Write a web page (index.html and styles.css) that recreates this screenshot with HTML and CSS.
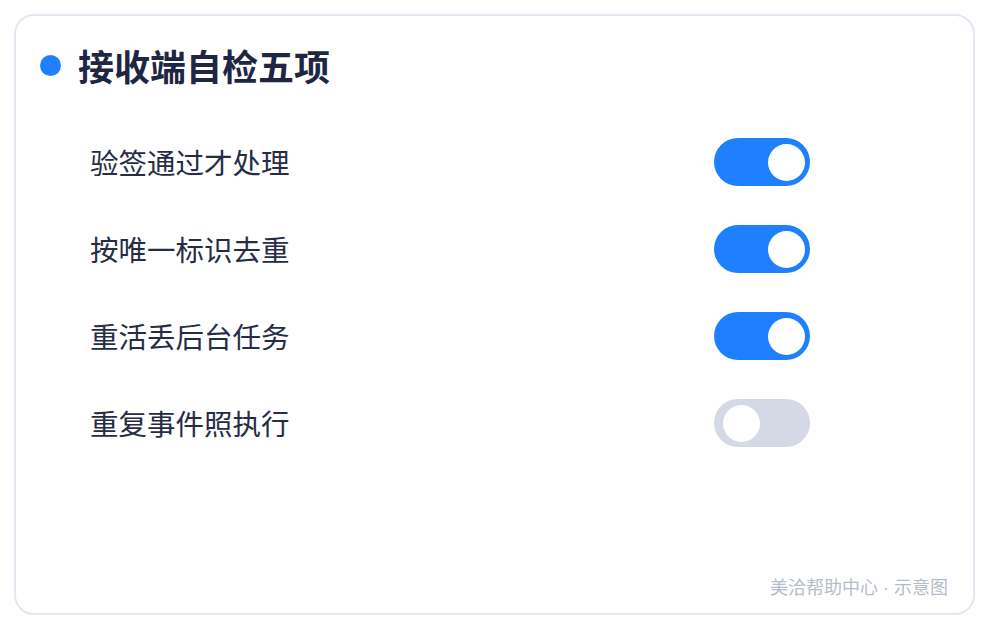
FILE: index.html
```html
<!DOCTYPE html>
<html lang="zh">
<head>
<meta charset="utf-8">
<link rel="stylesheet" href="styles.css">
</head>
<body>
<div class="page">
  <div class="card">
    <div class="title-row">
      <span class="dot"></span>
      <h1 class="title">接收端自检五项</h1>
    </div>
    <div class="list">
      <div class="row"><span class="label">验签通过才处理</span><span class="toggle on"><span class="knob"></span></span></div>
      <div class="row"><span class="label">按唯一标识去重</span><span class="toggle on"><span class="knob"></span></span></div>
      <div class="row"><span class="label">重活丢后台任务</span><span class="toggle on"><span class="knob"></span></span></div>
      <div class="row"><span class="label">重复事件照执行</span><span class="toggle"><span class="knob"></span></span></div>
    </div>
    <div class="footer">美洽帮助中心<span class="sep"> · </span>示意图</div>
  </div>
</div>
</body>
</html>
```
FILE: styles.css
```css
* { box-sizing: border-box; }
html, body { margin: 0; padding: 0; background: #ffffff; }
body {
  font-family: "Noto Sans CJK SC", "Noto Sans", sans-serif;
  width: 990px;
  height: 630px;
}
.page {
  padding: 14px 15px 15px 14px;
  height: 630px;
}
.card {
  height: 601px;
  border: 2px solid #e4e7f1;
  border-radius: 20px;
  background: #fff;
  display: flex;
  flex-direction: column;
  padding: 25px 24px 14px 24px;
}
.title-row {
  display: flex;
  align-items: center;
  height: 48px;
}
.dot {
  width: 21px;
  height: 21px;
  border-radius: 50%;
  background: #1e80ff;
  margin-right: 17px;
  flex: none;
}
.title {
  margin: 0;
  font-size: 36px;
  font-weight: 700;
  color: #1f2642;
  line-height: 48px;
}
.list {
  margin-top: 49px;
  margin-left: 50px;
  width: 720px;
  display: flex;
  flex-direction: column;
  gap: 39px;
}
.row {
  display: flex;
  align-items: center;
  justify-content: space-between;
  height: 48px;
}
.label {
  font-size: 28.5px;
  color: #262c45;
  line-height: 48px;
}
.toggle {
  width: 96px;
  height: 48px;
  border-radius: 24px;
  background: #d5d9e6;
  display: flex;
  align-items: center;
  padding: 0 5px;
  justify-content: flex-start;
}
.toggle.on {
  background: #1e80ff;
  justify-content: flex-end;
}
.toggle .knob {
  width: 37px;
  height: 37px;
  border-radius: 50%;
  background: #fff;
}
.toggle:not(.on) { padding-left: 9px; }
.footer {
  margin-top: auto;
  text-align: right;
  font-size: 18px;
  line-height: 22px;
  color: #b7bccc;
  padding-right: 1px;
}
.sep {
  font-family: "Liberation Sans", sans-serif;
  white-space: pre;
}
```
